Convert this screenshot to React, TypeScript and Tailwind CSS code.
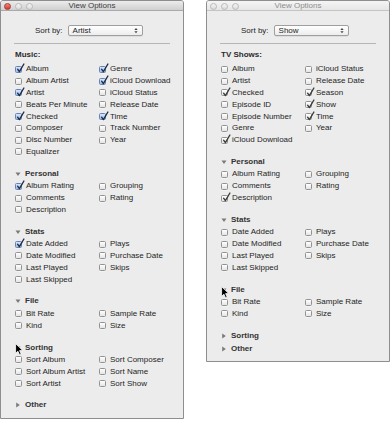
import React from "react";

type Item = { label: string; checked?: boolean };
type Section = { title: string; open: boolean; left?: Item[]; right?: Item[] };

const it = (label: string, checked = false): Item => ({ label, checked });

function Checkbox({ checked, active }: { checked?: boolean; active: boolean }) {
  const box = checked && active
    ? "border-[#6684b3] from-[#d8e5f7] to-[#9cbbe5]"
    : "border-[#929292] from-white to-[#e4e4e4]";
  return (
    <span
      className={`relative block w-[7px] h-[7px] shrink-0 rounded-[1.5px] border bg-gradient-to-b shadow-[0_0.5px_0_rgba(255,255,255,0.8)] ${box}`}
    >
      {checked && (
        <svg
          width="9"
          height="10"
          viewBox="0 0 9 10"
          className="absolute left-[-0.5px] top-[-3.5px] overflow-visible"
        >
          <path
            d="M1.6 6.2 L3.4 8.6 L7.9 1"
            fill="none"
            stroke={active ? "#1c2a4b" : "#3a3a3a"}
            strokeWidth="1.35"
            strokeLinecap="round"
            strokeLinejoin="round"
          />
        </svg>
      )}
    </span>
  );
}

function Column({ items, active, width }: { items: Item[]; active: boolean; width?: string }) {
  return (
    <div className={`flex flex-col ${width ?? ""}`}>
      {items.map((i) => (
        <div key={i.label} className="flex h-[11.8px] items-center">
          <Checkbox checked={i.checked} active={active} />
          <span className="ml-[4px] whitespace-nowrap text-[8px] leading-[8px] text-[#1e1e1e]">
            {i.label}
          </span>
        </div>
      ))}
    </div>
  );
}

function Rows({ left, right, active }: { left: Item[]; right: Item[]; active: boolean }) {
  return (
    <div className="flex">
      <Column items={left} active={active} width="w-[84px]" />
      <Column items={right} active={active} />
    </div>
  );
}

function Disclosure({ open }: { open: boolean }) {
  return (
    <svg width="6" height="6" viewBox="0 0 6 6" className="shrink-0">
      {open ? (
        <path d="M0.5 1.5 L5.5 1.5 L3 5 Z" fill="#7a7a7a" />
      ) : (
        <path d="M1.2 0.5 L4.8 3 L1.2 5.5 Z" fill="#7a7a7a" />
      )}
    </svg>
  );
}

function Cursor() {
  return (
    <svg width="9" height="13" viewBox="0 0 9 13">
      <path
        d="M0.6 0.6 L0.6 10.4 L2.9 8.2 L4.6 12 L6.2 11.3 L4.6 7.6 L7.8 7.6 Z"
        fill="#000"
        stroke="#fff"
        strokeWidth="0.8"
        strokeLinejoin="round"
      />
    </svg>
  );
}

function TrafficLights({ active }: { active: boolean }) {
  return (
    <div className="absolute left-[2.5px] top-[1.5px] flex gap-[4px]">
      {active ? (
        <span className="block h-[7px] w-[7px] rounded-full border border-[#a8392f] bg-gradient-to-b from-[#f5867d] to-[#d1362b]" />
      ) : (
        <span className="block h-[7px] w-[7px] rounded-full border border-[#b9b9b9] bg-gradient-to-b from-[#f4f4f4] to-[#dcdcdc]" />
      )}
      <span className="block h-[7px] w-[7px] rounded-full border border-[#b9b9b9] bg-gradient-to-b from-[#f4f4f4] to-[#dcdcdc]" />
      <span className="block h-[7px] w-[7px] rounded-full border border-[#b9b9b9] bg-gradient-to-b from-[#f4f4f4] to-[#dcdcdc]" />
    </div>
  );
}

function ViewOptions({
  active,
  sortBy,
  group,
  mainLeft,
  mainRight,
  sections,
  cursor,
}: {
  active: boolean;
  sortBy: string;
  group: string;
  mainLeft: Item[];
  mainRight: Item[];
  sections: Section[];
  cursor: { left: string; top: string };
}) {
  return (
    <div className="relative w-[184px] shrink-0 rounded-t-[3px] border border-[#8e8e8e] bg-[#ececec] font-['Liberation_Sans',Arial,sans-serif]">
      {/* title bar */}
      <div
        className={`relative flex h-[10px] items-center justify-center rounded-t-[2px] border-b bg-gradient-to-b ${
          active ? "border-[#a9a9a9] from-[#ececec] to-[#d0d0d0]" : "border-[#c4c4c4] from-[#f5f5f5] to-[#e6e6e6]"
        }`}
      >
        <TrafficLights active={active} />
        <span className={`text-[8px] leading-[8px] ${active ? "text-[#3c3c3c]" : "text-[#8e8e8e]"}`}>View Options</span>
      </div>

      {/* sort by */}
      <div className="mt-[14px] flex h-[11px] items-center pl-[34px]">
        <span className="text-[8px] leading-[8px] text-[#1e1e1e]">Sort by:</span>
        <div className="ml-[5px] flex h-[11px] w-[75px] items-center justify-between rounded-[2px] border border-[#9f9f9f] bg-gradient-to-b from-white to-[#ededed] pl-[4px] pr-[4px] shadow-[0_0.5px_0.5px_rgba(0,0,0,0.12)]">
          <span className="text-[8px] leading-[8px] text-[#1e1e1e]">{sortBy}</span>
          <svg width="4" height="7" viewBox="0 0 4 7">
            <path d="M0.4 3 L2 1 L3.6 3 Z" fill="#444" />
            <path d="M0.4 4.2 L2 6.2 L3.6 4.2 Z" fill="#444" />
          </svg>
        </div>
      </div>

      <div className="mx-[13px] mt-[7px] h-px bg-[#b6b6b6]" />

      <div className="pb-[6px] pl-[14px]">
        <div className="mt-[4px] mb-[2.5px] flex h-[13px] items-center">
          <span className="text-[8px] font-bold leading-[8px] text-[#2a2a2a]">{group}</span>
        </div>
        <div className="mb-[9.5px]">
          <Rows left={mainLeft} right={mainRight} active={active} />
        </div>

        {sections.map((s) => (
          <div key={s.title} className={s.open ? "mb-[9.5px] last:mb-0" : ""}>
            <div className="flex h-[13px] items-center">
              <Disclosure open={s.open} />
              <span className="ml-[4px] text-[8px] font-bold leading-[8px] text-[#333]">{s.title}</span>
            </div>
            {s.open && <Rows left={s.left ?? []} right={s.right ?? []} active={active} />}
          </div>
        ))}
      </div>

      <div className="absolute" style={{ left: cursor.left, top: cursor.top }}>
        <Cursor />
      </div>
    </div>
  );
}

export default function App() {
  return (
    <div className="flex h-[421px] w-[390px] items-start gap-[22px] bg-white">
      <ViewOptions
        active
        sortBy="Artist"
        group="Music:"
        mainLeft={[
          it("Album", true),
          it("Album Artist"),
          it("Artist", true),
          it("Beats Per Minute"),
          it("Checked", true),
          it("Composer"),
          it("Disc Number"),
          it("Equalizer"),
        ]}
        mainRight={[
          it("Genre", true),
          it("iCloud Download", true),
          it("iCloud Status"),
          it("Release Date"),
          it("Time", true),
          it("Track Number"),
          it("Year"),
        ]}
        sections={[
          { title: "Personal", open: true, left: [it("Album Rating", true), it("Comments"), it("Description")], right: [it("Grouping"), it("Rating")] },
          {
            title: "Stats",
            open: true,
            left: [it("Date Added", true), it("Date Modified"), it("Last Played"), it("Last Skipped")],
            right: [it("Plays"), it("Purchase Date"), it("Skips")],
          },
          { title: "File", open: true, left: [it("Bit Rate"), it("Kind")], right: [it("Sample Rate"), it("Size")] },
          {
            title: "Sorting",
            open: true,
            left: [it("Sort Album"), it("Sort Album Artist"), it("Sort Artist")],
            right: [it("Sort Composer"), it("Sort Name"), it("Sort Show")],
          },
          { title: "Other", open: false },
        ]}
        cursor={{ left: "14px", top: "342px" }}
      />
      <ViewOptions
        active={false}
        sortBy="Show"
        group="TV Shows:"
        mainLeft={[
          it("Album"),
          it("Artist"),
          it("Checked", true),
          it("Episode ID"),
          it("Episode Number"),
          it("Genre"),
          it("iCloud Download", true),
        ]}
        mainRight={[
          it("iCloud Status"),
          it("Release Date"),
          it("Season", true),
          it("Show", true),
          it("Time", true),
          it("Year"),
        ]}
        sections={[
          { title: "Personal", open: true, left: [it("Album Rating"), it("Comments"), it("Description", true)], right: [it("Grouping"), it("Rating")] },
          {
            title: "Stats",
            open: true,
            left: [it("Date Added"), it("Date Modified"), it("Last Played"), it("Last Skipped")],
            right: [it("Plays"), it("Purchase Date"), it("Skips")],
          },
          { title: "File", open: true, left: [it("Bit Rate"), it("Kind")], right: [it("Sample Rate"), it("Size")] },
          { title: "Sorting", open: false },
          { title: "Other", open: false },
        ]}
        cursor={{ left: "14px", top: "285px" }}
      />
    </div>
  );
}
